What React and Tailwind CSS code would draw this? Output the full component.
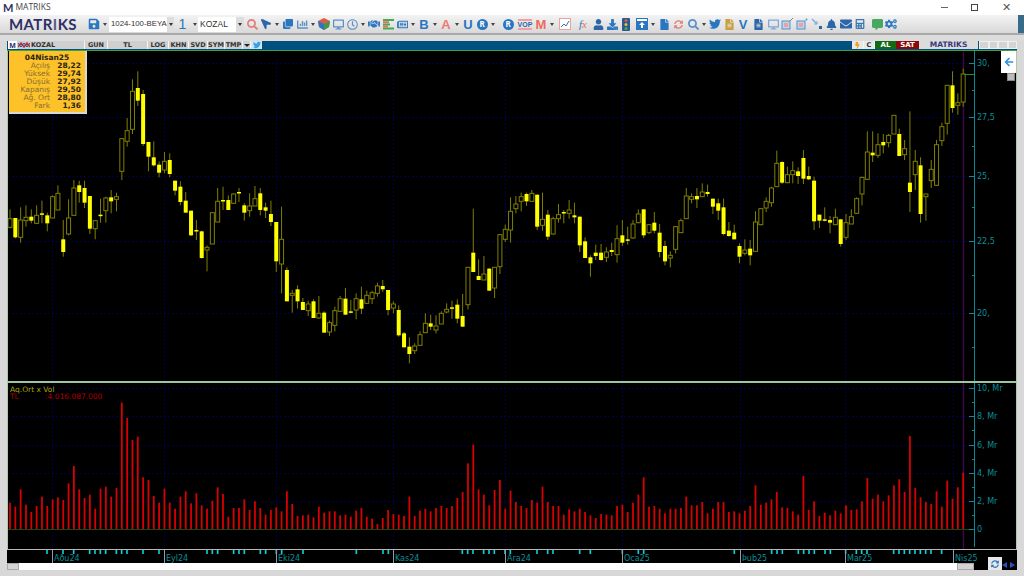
import React from "react";
import {
  FaSave, FaSearch, FaLocationArrow, FaClone, FaChartBar, FaDesktop, FaRegClock, FaHandshake,
  FaRegNewspaper, FaUser, FaFileAlt, FaTwitter, FaBell, FaEnvelope, FaCalculator, FaCommentAlt,
  FaCogs, FaFile, FaDownload, FaBolt, FaSyncAlt, FaArrowLeft,
} from "react-icons/fa";

const mono = { fontFamily: "'DejaVu Sans', sans-serif" };

// [wickTop, bodyTop, bodyBottom, wickBottom, filled], read off the chart at 3x
const A = [[448,476,502,505,0],[474,474,532,535,1],[442,480,532,548,0],[436,472,482,500,0],[448,470,482,490,1],[436,466,490,492,0],[422,460,462,490,1],[458,466,490,514,1],[406,410,474,474,0],[376,400,450,450,0],[480,538,576,590,1],[418,474,522,526,0],[360,384,466,466,0],[362,376,396,428,1],[362,384,428,444,1],[408,408,506,522,1],[480,482,506,538,0],[416,464,468,488,1],[410,414,452,488,0],[390,412,424,460,1],[398,410,418,454,0],[236,236,334,360,0],[174,212,244,260,0],[58,94,208,222,0],[34,84,122,138,1],[90,102,252,258,1],[246,246,290,334,1],[244,292,316,320,1],[304,314,338,352,1],[276,304,330,340,0],[280,300,342,352,1],[362,362,392,406,1],[364,380,426,436,1],[396,422,458,458,1],[452,452,526,528,1],[480,510,512,540,1],[512,514,594,596,1],[556,562,570,634,0],[456,458,552,552,0],[384,424,486,486,0],[380,420,422,450,1],[406,420,450,450,1],[400,402,430,432,0],[384,396,398,426,1],[430,436,458,482,1],[400,438,452,470,0],[378,416,438,438,0]].map((c) => [60, ...c]);
const B = [[54,70,120,136,1],[98,112,122,144,1],[92,132,156,168,1],[156,156,274,306,1],[110,208,282,370,0],[292,300,394,394,1],[360,370,376,428,0],[346,358,394,416,1],[384,396,420,420,1],[392,402,422,438,0],[388,394,444,444,1],[378,430,444,446,0],[424,428,488,488,1],[452,458,486,498,0],[410,422,466,484,0],[378,386,424,424,0],[354,386,434,434,1],[390,424,428,430,1],[370,386,420,448,0],[350,388,416,432,1],[362,376,400,402,0],[362,368,386,402,0],[338,348,370,380,0],[330,348,358,366,1],[360,360,420,436,1],[394,402,414,430,0],[406,420,496,500,1],[486,490,532,532,1],[502,530,552,580,1],[520,528,542,552,0],[484,494,526,526,0],[430,460,488,488,0],[434,460,470,480,1],[436,468,480,490,0],[424,430,462,462,0],[400,418,426,430,0],[392,412,416,446,1],[388,404,446,460,1],[372,438,470,470,1],[292,292,404,418,0],[116,248,306,306,1],[268,318,330,330,1],[258,312,330,330,0],[294,296,362,362,1],[292,292,354,384,0],[192,194,290,312,0],[164,178,208,216,0],[82,124,180,218,0],[78,102,116,130,0]].map((c) => [170, ...c]);
const C = [[68,80,94,124,0],[68,72,94,108,1],[60,70,94,96,0],[74,74,170,180,1],[68,148,166,182,0],[120,134,200,210,1],[140,146,192,194,0],[102,134,146,158,0],[120,126,130,160,1],[90,120,130,146,0],[98,136,142,160,1],[140,140,226,246,1],[202,214,264,264,1],[256,262,280,320,1],[224,248,258,270,1],[222,248,270,272,1],[232,246,262,276,0],[218,240,246,258,1],[166,206,254,278,0],[150,196,218,228,1],[170,208,210,224,1],[150,162,204,206,0],[118,132,158,160,0],[118,118,196,204,1],[164,164,188,192,0],[126,158,182,190,1],[162,188,246,262,1],[212,228,274,286,1],[244,256,264,292,0],[168,170,238,250,0],[146,152,188,188,0],[54,78,146,146,0],[70,80,88,100,0],[54,78,88,114,1],[40,66,80,80,0],[44,66,72,80,1],[86,86,110,132,1],[86,100,122,150,1],[86,112,192,196,1],[156,182,198,200,1],[164,188,208,208,1],[220,228,260,280,1],[208,240,250,256,0],[210,236,256,286,1],[124,156,244,246,0]].map((c) => [170, ...c]);
const D = [[446,446,494,496,0],[412,424,444,456,0],[380,384,428,440,0],[272,310,380,380,0],[304,306,368,372,1],[320,344,368,370,0],[304,332,344,370,0],[322,334,348,372,1],[270,294,356,372,1],[320,348,358,360,1],[350,362,484,510,1],[464,464,482,504,1],[442,478,482,484,1],[468,480,488,520,1],[446,472,494,496,0],[478,478,552,560,1],[462,488,532,540,0],[448,470,492,492,0],[412,416,460,462,0],[350,352,402,436,0],[214,276,358,360,0],[214,278,286,306,1],[220,254,286,294,0],[222,246,256,280,1],[222,226,248,262,0],[166,166,222,222,0],[206,222,288,288,1],[240,266,284,300,0],[154,368,396,456,1],[270,304,344,390,0],[292,316,462,488,1],[402,402,410,482,0],[300,328,362,384,0],[240,254,376,378,0],[188,200,242,258,0],[76,76,190,224,0],[34,76,144,158,1],[100,128,136,164,0],[26,42,126,140,0]].map((c) => [60, ...c]);
const candles = [...A, ...B, ...C, ...D];

// top of each volume bar, same 3x reading (base y 370)
const vols = [398,410,358,404,426,408,380,408,388,382,390,340,288,358,384,374,416,356,350,380,354,98,144,210,200,322,330,378,398,356,398,416,380,364,400,370,406,416,392,352,372,440,414,414,388,420,394,414,434,420,412,424,364,402,438,436,434,442,410,428,424,424,436,434,440,422,414,440,446,462,444,420,432,434,438,380,438,422,416,424,414,408,414,408,384,366,280,224,358,374,406,360,330,416,362,396,408,414,390,398,350,396,408,408,434,418,424,416,426,436,444,432,434,436,408,404,426,398,374,322,410,408,416,430,416,416,414,380,406,406,396,430,416,396,396,426,424,430,422,408,346,404,398,388,366,412,414,424,434,318,420,394,438,428,436,422,430,406,420,418,394,324,386,374,394,376,346,328,366,198,354,382,396,402,364,410,332,386,352,308];

const marks = [
  ...[141,189,221,269,285,301,317,349,365,381,429,477,621,637,653,701,717,733,781,797,829,845,909].map((v) => v / 3),
  ...[49,129,145,367,383,399,431,447,463,495,511,591,623,639,719,751,847,895,911].map((v) => 340 + v / 3),
  ...[151,263,279,295,343,359,375,391,423,439,485,517,533,549,629,645,661,677,693,709,725,741,773].map((v) => 684 + v / 3),
];
// the app prints these two month names with the wrong code page
const months = [[52, "Aðu24"], [164, "Eyl24"], [276, "Eki24"], [393, "Kas24"], [505, "Ara24"], [622, "Oca25"], [740, "Þub25"], [845, "Mar25"], [953, "Nis25"]];
const gridX = [52, 164, 276, 393, 505, 622, 740, 845, 953];
const barX = (i) => 10 + i * 5.325;

const rows = [["Açılış", "28,22"], ["Yüksek", "29,74"], ["Düşük", "27,92"], ["Kapanış", "29,50"], ["Ağ. Ort", "28,80"], ["Fark", "1,36"]];

function Caret() {
  return <div className="flex-none w-[8px] flex justify-center"><div className="border-x-[2.5px] border-t-[3px] border-x-transparent border-t-[#444]" /></div>;
}

function Tool({ className = "", children }) {
  return <div className={`flex-none w-[14px] h-[16px] flex items-center justify-center ${className}`}>{children}</div>;
}

function Tab({ className, children }) {
  return (
    <div className={`flex-none h-[8px] flex items-center justify-center bg-[#cfcfcf] border-r border-[#f4f4f4] text-[6.5px] font-bold text-[#333] leading-none ${className}`} style={mono}>
      {children}
    </div>
  );
}

function Toolbar() {
  return (
    <div className="h-[18px] flex-none flex items-center bg-gradient-to-b from-[#f3f3f3] to-[#d9d9d9] text-[#2a76c0]">
      <div className="w-[87px] flex-none pl-[9px] text-[15px] leading-none font-bold tracking-[0.4px] text-[#2e2f66]" style={{ fontFamily: "Lato, sans-serif" }}>MATR<span className="text-[#5a5a8a]">I</span>KS</div>
      <Tool className="w-[12px]"><FaSave size={12} className="text-[#2a76c0]" /></Tool>
      <Caret />
      <div className="flex-none w-[65px] h-[15px] flex items-center justify-between bg-white text-[7.8px] text-[#333] pl-[2px]" style={{ fontFamily: "'Liberation Sans', sans-serif" }}>
        <span className="whitespace-nowrap">1024-100-BEYA</span>
        <div className="w-[7px] h-[15px] bg-[#ddd] flex items-center justify-center"><div className="border-x-[2px] border-t-[3px] border-x-transparent border-t-[#333]" /></div>
      </div>
      <div className="flex-none w-[17px] text-center text-[14px] leading-none text-[#2a76c0]" style={{ fontFamily: "'Liberation Sans', sans-serif" }}>1</div>
      <Caret />
      <div className="flex-none w-[46px] -ml-[1px] h-[15px] flex items-center justify-between bg-white text-[8.5px] text-[#333] pl-[2px]" style={{ fontFamily: "'Liberation Sans', sans-serif" }}>
        <span>KOZAL</span>
        <div className="w-[8px] h-[15px] bg-[#ddd] flex items-center justify-center"><div className="border-x-[2px] border-t-[3px] border-x-transparent border-t-[#333]" /></div>
      </div>
      <Tool className="ml-[1px]"><FaSearch size={11} className="text-[#e0807a]" /></Tool>
      <Tool><FaLocationArrow size={10} className="text-[#2a66a8] -scale-x-100" /></Tool>
      <Caret />
      <Tool><FaClone size={10} /></Tool>
      <Tool><FaChartBar size={11} className="text-[#5a90c8]" /></Tool>
      <Caret />
      <Tool>
        <svg width="12" height="12" viewBox="0 0 12 12"><path d="M6 0 12 3 11 9 6 12 1 9 0 3Z" fill="#e05a4a" /><path d="M6 6 12 3 11 9 6 12Z" fill="#3a9a50" /><path d="M6 6 0 3 1 9 6 12Z" fill="#2a76c0" /></svg>
      </Tool>
      <Tool><FaDesktop size={11} className="text-[#5a90c8]" /></Tool>
      <Tool><FaRegClock size={11} className="text-[#5a90c8]" /></Tool>
      <Caret />
      <Tool><FaHandshake size={12} className="text-[#2a76c0]" /></Tool>
      <Tool>
        <svg width="11" height="11" viewBox="0 0 11 11"><path d="M0 1h11M0 5.500h7M0 9.500h11" stroke="#3fb050" strokeWidth="2" /><path d="M0 3.200h6M0 7.500h5" stroke="#ef6a60" strokeWidth="2" /></svg>
      </Tool>
      <Tool><FaRegNewspaper size={11} /></Tool>
      <Caret />
      <Tool><span className="text-[13px] leading-none font-bold" style={{ fontFamily: "'Liberation Sans', sans-serif" }}>B</span></Tool>
      <Caret />
      <Tool><span className="text-[13px] leading-none font-bold text-[#f07a72]" style={{ fontFamily: "'Liberation Sans', sans-serif" }}>A</span></Tool>
      <Caret />
      <Tool><span className="text-[13px] leading-none font-bold" style={{ fontFamily: "'Liberation Sans', sans-serif" }}>U</span></Tool>
      <Tool><div className="w-[11px] h-[11px] rounded-full bg-[#2a76c0] flex items-center justify-center text-[8px] font-bold text-white leading-none">R</div></Tool>
      <Caret />
      <Tool className="ml-[4px]"><div className="w-[11px] h-[11px] rounded-full bg-[#2a76c0] flex items-center justify-center text-[8px] font-bold text-white leading-none">R</div></Tool>
      <Tool className="ml-[3px]"><span className="text-[7px] leading-none font-bold text-[#2a66a8] border-y-2 border-[#f0a0a0]" style={{ fontFamily: "'Liberation Sans', sans-serif" }}>VOP</span></Tool>
      <Tool className="ml-[2px]"><span className="text-[13px] leading-none font-bold text-[#ef6a60]" style={{ fontFamily: "'Liberation Sans', sans-serif" }}>M</span></Tool>
      <Caret />
      <Tool className="ml-[2px]">
        <svg width="12" height="12" viewBox="0 0 12 12"><rect x=".5" y=".5" width="11" height="11" fill="#fff" stroke="#f0a0a0" /><path d="M2 9 5 6 7 8 10 3" fill="none" stroke="#2a76c0" /></svg>
      </Tool>
      <Tool className="ml-[4px]"><span className="text-[11px] leading-none italic" style={{ fontFamily: "'Liberation Serif', serif" }}>f<span className="text-[#ef6a60]">x</span></span></Tool>
      <Tool className="ml-[1px]"><FaUser size={11} className="text-[#2a66a8]" /></Tool>
      <Tool><FaDownload size={11} className="text-[#2a76c0]" /></Tool>
      <Tool>
        <svg width="8" height="13" viewBox="0 0 8 13"><rect width="8" height="13" rx="1" fill="#2a5a90" /><circle cx="4" cy="2.500" r="1.500" fill="#e05a4a" /><circle cx="4" cy="6.500" r="1.500" fill="#e8c040" /><circle cx="4" cy="10.500" r="1.500" fill="#3fb050" /></svg>
      </Tool>
      <Tool className="ml-[2px]">
        <svg width="12" height="12" viewBox="0 0 12 12"><rect width="12" height="12" fill="#2a76c0" /><rect x="1" y="1" width="10" height="2" fill="#fff" /><path d="M6 4 9 7H7v3H5V7H3Z" fill="#fff" /></svg>
      </Tool>
      <Caret />
      <Tool><FaFile size={11} className="text-[#2a76c0]" /></Tool>
      <Tool><FaSyncAlt size={9} className="text-[#e08078]" /></Tool>
      <Tool className="ml-[1px]"><FaSearch size={11} className="text-[#5a90c8]" /></Tool>
      <Caret />
      <Tool><FaTwitter size={12} className="text-[#2a76c0]" /></Tool>
      <Tool><FaFileAlt size={11} className="text-[#c8a040]" /></Tool>
      <Tool><span className="text-[13px] leading-none font-bold" style={{ fontFamily: "'Liberation Sans', sans-serif" }}>V</span></Tool>
      <Tool className="ml-[1px]"><FaFileAlt size={11} className="text-[#2a66a8]" /></Tool>
      <Tool className="ml-[1px]"><FaDesktop size={11} className="text-[#7aa8d8]" /></Tool>
      <Tool>
        <svg width="12" height="12" viewBox="0 0 12 12"><rect x="1" y="3" width="8" height="8" fill="#bcd4ec" stroke="#5a90c8" /><rect x="3" y="5" width="4" height="4" fill="#f0a0a0" /><path d="M9 3 12 0" stroke="#888" /></svg>
      </Tool>
      <Tool className="ml-[1px]">
        <svg width="12" height="12" viewBox="0 0 12 12"><rect x="1" y="3" width="8" height="8" fill="#bcd4ec" stroke="#5a90c8" /><rect x="3" y="5" width="4" height="4" fill="#f0a0a0" /><circle cx="10.500" cy="1.500" r="1" fill="#5a90c8" /></svg>
      </Tool>
      <Tool className="ml-[1px]">
        <svg width="12" height="12" viewBox="0 0 12 12"><path d="M1 1 6 6" stroke="#7ab0e0" strokeWidth="1.500" /><path d="M6 6V3M6 6H3" stroke="#7ab0e0" /><rect x="8" y="8" width="3" height="3" fill="#2a66a8" /></svg>
      </Tool>
      <Tool><FaBell size={11} className="text-[#2a66a8]" /></Tool>
      <Tool className="ml-[1px]"><FaEnvelope size={12} className="text-[#2a66a8]" /></Tool>
      <Tool><FaCalculator size={10} className="text-[#3a78b0]" /></Tool>
      <Tool className="ml-[3px]"><FaCommentAlt size={11} className="text-[#48a860]" /></Tool>
      <Tool><FaCogs size={12} className="text-[#2a76c0]" /></Tool>
      <div className="ml-auto w-[6px] h-full bg-[#3a6a8a]" />
    </div>
  );
}

function PriceChart() {
  const gridY = [63, 117, 176, 241, 313];
  const labels = [[63, "30,"], [117, "27,5"], [176, "25,"], [241, "22,5"], [313, "20,"]];
  return (
    <svg className="block w-[1008px] h-[330px]" viewBox="8 51 1008 330">
      {gridY.map((y) => <line key={y} x1="8" x2="969" y1={y + 0.5} y2={y + 0.5} stroke="#000050" strokeDasharray="2 2" />)}
      {gridX.map((x) => <line key={x} x1={x + 0.5} x2={x + 0.5} y1="51" y2="381" stroke="#000050" strokeDasharray="2 2" />)}
      <line x1="963.5" x2="963.5" y1="51" y2="381" stroke="#3a0a48" strokeWidth="1.500" />
      {candles.map(([base, wt, bt, bb, wb, filled], i) => {
        const x = barX(i);
        return (
          <g key={i}>
            <line x1={x} x2={x} y1={base + wt / 3} y2={base + wb / 3} stroke="#7f7f00" />
            {filled
              ? <rect x={x - 2} y={base + bt / 3} width="4" height={Math.max((bb - bt) / 3, 1.500)} fill="#ffff00" />
              : <rect x={x - 2} y={base + bt / 3} width="4" height={(bb - bt) / 3} fill="#000" stroke="#7f7f00" />}
          </g>
        );
      })}
      <line x1="974.5" x2="974.5" y1="51" y2="381" stroke="#0a8a94" />
      <line x1="964" x2="974" y1="74.500" y2="74.500" stroke="#1a9a1a" />
      {[90, 146, 207, 275, 347].map((y) => <line key={y} x1="972" x2="974" y1={y + 0.5} y2={y + 0.5} stroke="#0a8a94" />)}
      {labels.map(([y, t]) => (
        <g key={y}>
          <line x1="969" x2="974" y1={y + 0.5} y2={y + 0.5} stroke="#0a8a94" />
          <text x="977" y={y + 3} fontSize="8" fill="#0a8f98" style={mono}>{t}</text>
        </g>
      ))}
    </svg>
  );
}

function VolumeChart() {
  const gridY = [388, 416, 445, 473, 501];
  const labels = [[388, "10, Mr"], [416, "8, Mr"], [445, "6, Mr"], [473, "4, Mr"], [501, "2, Mr"], [529, "0"]];
  return (
    <svg className="block w-[1008px] h-[166px]" viewBox="8 383 1008 166">
      {gridY.map((y) => <line key={y} x1="8" x2="969" y1={y + 0.5} y2={y + 0.5} stroke="#000050" strokeDasharray="2 2" />)}
      {gridX.map((x) => <line key={x} x1={x + 0.5} x2={x + 0.5} y1="383" y2="549" stroke="#000050" strokeDasharray="2 2" />)}
      <line x1="963.5" x2="963.5" y1="383" y2="549" stroke="#3a0a48" strokeWidth="1.500" />
      <line x1="8" x2="974" y1="529.500" y2="529.500" stroke="#1a4a10" />
      {vols.map((top, i) => (
        <rect key={i} x={barX(i) - 0.9} y={370 + top / 3} width="1.800" height={529 - 370 - top / 3} fill="#d80000" />
      ))}
      <line x1="974.5" x2="974.5" y1="383" y2="547" stroke="#0a8a94" />
      {[402, 430, 459, 487, 515].map((y) => <line key={y} x1="972" x2="974" y1={y + 0.5} y2={y + 0.5} stroke="#0a8a94" />)}
      {labels.map(([y, t]) => (
        <g key={y}>
          <line x1="969" x2="974" y1={y + 0.5} y2={y + 0.5} stroke="#0a8a94" />
          <text x="977" y={y + 3} fontSize="8" fill="#0a8f98" style={mono}>{t}</text>
        </g>
      ))}
      <text x="10" y="392" fontSize="7.500" fill="#a8a800" style={mono}>Aq.Ort x Vol</text>
      <text x="10" y="399" fontSize="7.500" fill="#b00000" style={mono}>TL</text>
      <text x="45" y="399" fontSize="7.500" fill="#b00000" style={mono}>:4.016.087.000</text>
    </svg>
  );
}

function DateStrip() {
  return (
    <svg className="block w-[1010px] h-[14px]" viewBox="7 549 1010 14">
      <rect x="7" y="549" width="1010" height="1" fill="#b8b8b8" />
      {marks.map((x, i) => <rect key={i} x={x - 0.8} y="550" width="1.600" height="4" fill="#12d0d8" />)}
      {months.map(([x, t]) => (
        <g key={t}>
          <line x1={x + 0.5} x2={x + 0.5} y1="550" y2="563" stroke="#9a9a9a" />
          <text x={x + 2} y="561" fontSize="8" fill="#0a8f98" style={mono}>{t}</text>
        </g>
      ))}
    </svg>
  );
}

export default function App() {
  return (
    <div className="w-[1024px] h-[576px] flex flex-col overflow-hidden bg-[#d8d8d8]">
      {/* title bar */}
      <div className="h-[15px] flex-none flex items-center bg-white pl-[3px]">
        <span className="text-[11px] leading-none font-bold text-[#2e2f66]" style={{ fontFamily: "Lato, sans-serif" }}>M</span>
        <span className="ml-[2px] text-[8.500px] leading-none text-[#444]" style={{ fontFamily: "'Open Sans', sans-serif" }}>MATRIKS</span>
        <div className="ml-auto flex items-center text-[#555]">
          <div className="w-[7px] h-px bg-[#666]" />
          <div className="ml-[23px] w-[7px] h-[7px] border border-[#444]" />
          <div className="ml-[24px] mr-[13px] text-[11px] leading-none" style={{ fontFamily: "'Liberation Sans', sans-serif" }}>✕</div>
        </div>
      </div>

      <Toolbar />

      <div className="h-[8px] flex-none border-t-2 border-[#a9a9a9] bg-[#dcdcdc]" />

      {/* chart window */}
      <div className="flex-none ml-[7px] flex flex-col w-[1010px]">
        <div className="h-[10px] flex-none flex items-start bg-[#005080] border-b border-[#3fa03f] pl-px">
          <div className="flex-none w-[9px] h-[8px] bg-white flex items-center justify-center text-[7px] font-bold text-[#2e2f66] leading-none">M</div>
          <div className="flex-none w-[13px] h-[8px] bg-[#cfcfcf] flex items-center justify-center">
            <svg width="12" height="6" viewBox="0 0 12 6"><path d="M0 5 3 1 6 5 9 1 12 5" fill="none" stroke="#c0303a" strokeWidth="1.500" /><path d="M0 1 3 5 6 1 9 5 12 1" fill="none" stroke="#2a4a90" /></svg>
          </div>
          <Tab className="w-[55px] !justify-start pl-[1px]">KOZAL</Tab>
          <Tab className="w-[23px]">GUN</Tab>
          <Tab className="w-[40px]">TL</Tab>
          <Tab className="w-[21px]">LOG</Tab>
          <Tab className="w-[20px]">KHN</Tab>
          <Tab className="w-[19px]">SVD</Tab>
          <Tab className="w-[17px]">SYM</Tab>
          <Tab className="w-[18px]">TMP</Tab>
          <Tab className="w-[8px]"><div className="border-x-[3px] border-t-[3px] border-x-transparent border-t-[#223]" /></Tab>
          <div className="flex-none w-[11px] h-[8px] bg-[#cfe4f4] flex items-center justify-center"><FaTwitter size={8} className="text-[#3aa0e0]" /></div>
          <div className="flex-1" />
          <Tab className="w-[12px] bg-[#e8e8e8]"><FaBolt size={7} className="text-[#e8a020]" /></Tab>
          <Tab className="w-[11px] bg-[#e8e8e8] text-[#1a7a3a]">C</Tab>
          <div className="flex-none w-[21px] h-[8px] bg-[#146a14] text-white text-[7px] font-bold leading-none flex items-center justify-center" style={mono}>AL</div>
          <div className="flex-none w-[23px] h-[8px] bg-[#8a0a0a] text-white text-[7px] font-bold leading-none flex items-center justify-center" style={mono}>SAT</div>
          <div className="flex-none w-[59px] h-[8px] bg-[#dcdcdc] text-[#3a3a7a] text-[7.500px] font-bold leading-none flex items-center justify-center" style={mono}>MATRIKS</div>
          <div className="flex-none w-[10px] h-[8px] ml-px bg-[#d4d4d4] border border-[#eee]" />
          <div className="flex-none w-[9px] h-[8px] bg-[#d4d4d4] border border-[#eee]" />
          <div className="flex-none w-[10px] h-[8px] bg-[#d4d4d4] border border-[#eee]" />
          <div className="flex-none w-[9px] h-[8px] bg-[#d4d4d4] border border-[#eee]" />
        </div>

        <div className="relative flex-none w-[1010px] bg-black border-x border-x-[#a9c9a9]">
          <PriceChart />
          <div className="h-[2px] bg-[#9fc79f]" />
          <VolumeChart />
          {/* quote box */}
          <div className="absolute left-px top-0 w-[78px] h-[63px] bg-[#fdc12a] border-r-2 border-b-2 border-[#d8d8d8] pt-[3px] pr-[4px] text-[7.500px] leading-[8px]" style={mono}>
            <div className="text-center pl-[4px] font-bold text-[#2a2410]">04Nisan25</div>
            {rows.map(([label, value]) => (
              <div key={label} className="flex">
                <span className="w-[41px] text-right text-[#8a6e30] whitespace-nowrap">{label}</span>
                <span className="flex-1 text-right font-bold text-[#2a2410]">{value}</span>
              </div>
            ))}
          </div>
          {/* side buttons */}
          <div className="absolute right-0 top-0 w-[15px] h-[22px] bg-white flex items-center justify-center"><FaArrowLeft size={10} className="text-[#2a90e0]" /></div>
          <div className="absolute right-px top-[22px] w-[8px] h-[8px] bg-[#bbb] border border-[#888]" />
        </div>

        <div className="relative flex-none bg-black w-[1010px]">
          <DateStrip />
          <div className="absolute z-10 right-[15px] bottom-[-7px] w-[14px] h-[13px] bg-[#e8e8e8] flex items-center justify-center"><FaSyncAlt size={8} className="text-[#2a76c0]" /></div>
          <div className="absolute z-10 right-[2px] bottom-[-5px] flex gap-px">
            <div className="border-y-[3px] border-r-[5px] border-y-transparent border-r-[#2a50c0]" />
            <div className="border-y-[3px] border-l-[5px] border-y-transparent border-l-[#2a50c0] ml-[2px]" />
          </div>
        </div>

        <div className="h-[7px] flex-none flex items-stretch">
          <div className="w-[12px] bg-[#d4d4d4] border border-[#aaa]" />
          <div className="w-[938px] bg-white" />
          <div className="w-[17px] bg-[#d4d4d4] border border-[#aaa]" />
          <div className="w-[43px] bg-black" />
        </div>
      </div>
    </div>
  );
}
